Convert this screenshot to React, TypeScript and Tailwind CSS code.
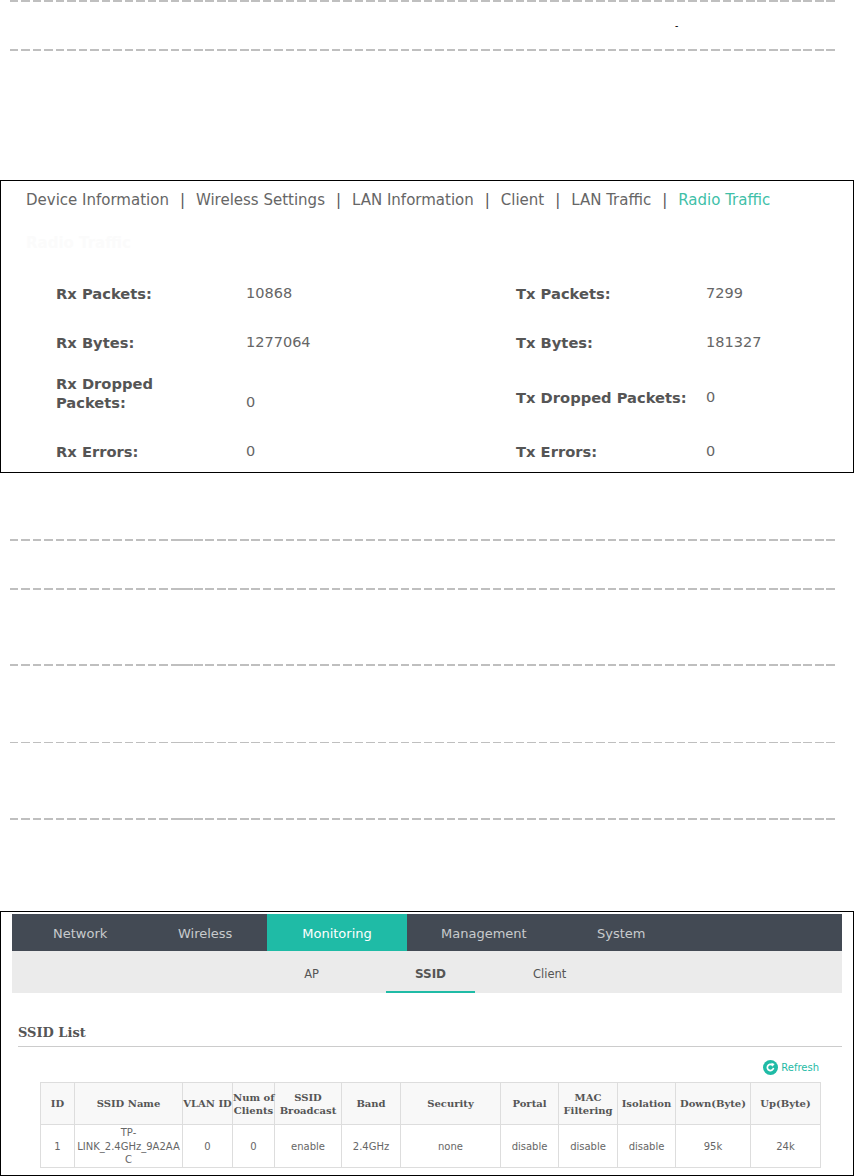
function Dash({ className = "", long = true }: { className?: string; long?: boolean }) {
  return (
    <div
      className={`ml-[10px] w-[826px] ${
        long
          ? "[background:linear-gradient(#bfbfbf,#bfbfbf)_162px_0/21px_100%_no-repeat,repeating-linear-gradient(90deg,#bfbfbf_0px,#bfbfbf_8.5px,transparent_8.5px,transparent_11.5px)]"
          : "bg-[repeating-linear-gradient(90deg,#bfbfbf_0px,#bfbfbf_8.5px,transparent_8.5px,transparent_11.5px)]"
      } ${className}`}
    />
  );
}

const font = "font-['DejaVu_Sans','Liberation_Sans',sans-serif]";

function Stat({ label, value, labelW = "w-[190px]", align = "items-center", extra = "" }: { label: string; value: string; labelW?: string; align?: string; extra?: string }) {
  return (
    <div className={`flex ${align} ${extra}`}>
      <div className={`${labelW} font-bold text-[14.7px] leading-[19px] text-[#555]`}>{label}</div>
      <div className="text-[14.5px] leading-[19px] text-[#666]">{value}</div>
    </div>
  );
}

const links = ["Device Information", "Wireless Settings", "LAN Information", "Client", "LAN Traffic"];
const heads: React.ReactNode[] = ["ID", "SSID Name", "VLAN ID", <>Num of<br />Clients</>, <>SSID<br />Broadcast</>, "Band", "Security", "Portal", <>MAC<br />Filtering</>, "Isolation", "Down(Byte)", "Up(Byte)"];
const cells: React.ReactNode[] = ["1", <>TP-<br />LINK_2.4GHz_9A2AA<br />C</>, "0", "0", "enable", "2.4GHz", "none", "disable", "disable", "disable", "95k", "24k"];

export default function App() {
  return (
    <div className={`w-[854px] h-[1176px] bg-white overflow-hidden flex flex-col ${font}`}>
      <Dash long={false} className="h-[2px]" />
      <div className="h-[47px] flex items-center pl-[675px] text-[10px] leading-[10px] text-black font-['Liberation_Sans',sans-serif]">-</div>
      <Dash long={false} className="h-[2px]" />

      <section className="mt-[129px] h-[293px] w-[854px] border border-black flex flex-col pl-[25px]">
        <nav className="flex items-center h-[36px] pt-[2px] text-[15px] text-[#666] whitespace-nowrap">
          {links.map((l) => (
            <span key={l} className="flex items-center">
              <span>{l}</span>
              <span className="w-[27px] text-center text-[#555]">|</span>
            </span>
          ))}
          <span className="text-[#3fbfa8]">Radio Traffic</span>
        </nav>
        <div className="h-[52px] flex items-center font-bold text-[15px] text-[#fbfbfb]">Radio Traffic</div>
        <div className="ml-[30px] grid grid-cols-[460px_1fr] grid-rows-[49px_49px_60px_44px]">
          <Stat label="Rx Packets:" value="10868" />
          <Stat label="Tx Packets:" value="7299" />
          <Stat label="Rx Bytes:" value="1277064" />
          <Stat label="Tx Bytes:" value="181327" />
          <Stat label="Rx Dropped Packets:" value="0" labelW="w-[190px] pr-[60px]" align="items-end" extra="pb-[15px]" />
          <Stat label="Tx Dropped Packets:" value="0" />
          <Stat label="Rx Errors:" value="0" align="items-start" extra="pt-[15px]" />
          <Stat label="Tx Errors:" value="0" align="items-start" extra="pt-[15px]" />
        </div>
      </section>

      <Dash className="mt-[66px] h-[2px]" />
      <Dash className="mt-[47px] h-[2px]" />
      <Dash className="mt-[74px] h-[2px]" />
      <Dash className="mt-[76px] h-[1px]" />
      <Dash className="mt-[75px] h-[2px]" />

      <section className="mt-[91px] h-[265px] w-[854px] border border-black px-[11px] pt-[2px]">
        <div className="flex h-[37px] bg-[#434a54] text-[13px] text-[#c8cacd]">
          <div className="w-[133px] pl-[41px] pt-[2px] flex items-center">Network</div>
          <div className="w-[122px] pl-[33px] pt-[2px] flex items-center">Wireless</div>
          <div className="w-[140px] pt-[2px] flex items-center justify-center bg-[#1fbba6] text-white">Monitoring</div>
          <div className="w-[155px] pl-[34px] pt-[2px] flex items-center">Management</div>
          <div className="pl-[35px] pt-[2px] flex items-center">System</div>
        </div>
        <div className="flex h-[42px] bg-[#ebebeb] text-[11.5px] text-[#555]">
          <div className="w-[307px] pt-[5px] flex items-center justify-end">AP</div>
          <div className="ml-[67px] w-[89px] pt-[5px] flex items-center justify-center font-bold text-[12px] border-b-2 border-[#1fbba6]">SSID</div>
          <div className="ml-[58px] pt-[5px] flex items-center">Client</div>
        </div>
        <h2 className="ml-[6px] mt-[30px] h-[24px] border-b border-[#ccc] text-[13px] leading-[20px] font-bold font-['DejaVu_Serif',serif] text-[#555]">SSID List</h2>
        <div className="h-[35px] w-[807px] pt-[6px] flex items-center justify-end gap-[3px] text-[10px] text-[#1fbba6] font-medium">
          <svg width="15" height="15" viewBox="0 0 16 16">
            <circle cx="8" cy="8" r="8" fill="#1fbba6" />
            <path d="M11.2 8.4a3.3 3.3 0 1 1-1.2-3" fill="none" stroke="#fff" strokeWidth="1.8" />
            <path d="M8.8 2.8 12.4 4.2 10 7.2z" fill="#fff" />
          </svg>
          Refresh
        </div>
        <table className="ml-[28px] w-[780px] table-fixed border-collapse text-[10px] leading-[13.5px] text-[#666]">
          <colgroup>
            <col className="w-[34px]" /><col className="w-[108px]" /><col className="w-[50px]" /><col className="w-[42px]" />
            <col className="w-[67px]" /><col className="w-[59px]" /><col className="w-[100px]" /><col className="w-[58px]" />
            <col className="w-[59px]" /><col className="w-[58px]" /><col className="w-[75px]" /><col className="w-[70px]" />
          </colgroup>
          <thead>
            <tr className="h-[42px] bg-[#f8f8f8]">
              {heads.map((h, i) => (
                <th key={i} className="border border-[#ddd] p-0 font-bold text-[#555] text-center leading-[13px] font-['DejaVu_Serif',serif] text-[10px] whitespace-nowrap">{h}</th>
              ))}
            </tr>
          </thead>
          <tbody>
            <tr className="h-[42px]">
              {cells.map((c, i) => (
                <td key={i} className="border border-[#ddd] p-0 pt-[1px] text-center whitespace-nowrap">{c}</td>
              ))}
            </tr>
          </tbody>
        </table>
      </section>
    </div>
  );
}
